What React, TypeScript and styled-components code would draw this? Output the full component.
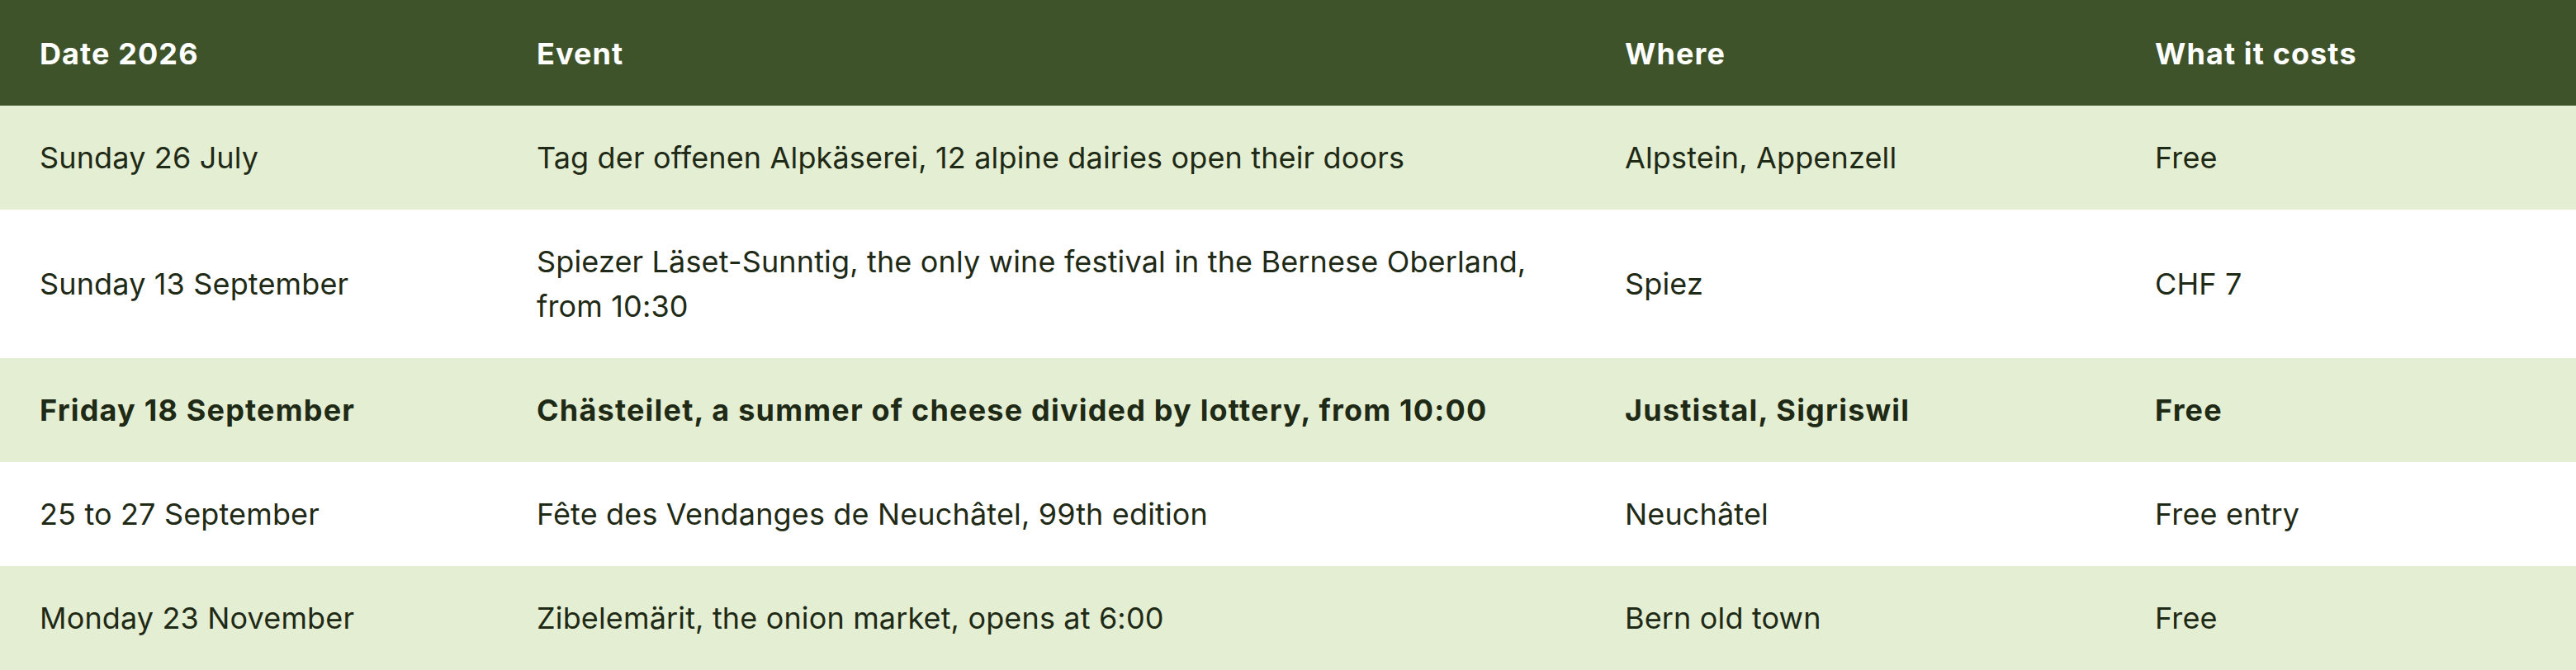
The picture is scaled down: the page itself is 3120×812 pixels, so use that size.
import React from "react";
import styled, { createGlobalStyle } from "styled-components";

const Global = createGlobalStyle`
  html, body { margin: 0; padding: 0; background: #ffffff; }
  body { font-family: Inter, "Noto Sans", "Liberation Sans", sans-serif; }
`;

const Table = styled.table`
  width: 3120px;
  border-collapse: collapse;
  table-layout: fixed;
  font-size: 36px;
  line-height: 54px;
  letter-spacing: 0.15px;
  color: #1f2a16;
`;

const HeadRow = styled.tr`
  background: #3e532a;
`;

const HeadCell = styled.th`
  padding: 38px 48px 36px;
  text-align: left;
  font-weight: 700;
  letter-spacing: 1.1px;
  color: #ffffff;
`;

const Row = styled.tr<{ $tint: boolean; $strong?: boolean }>`
  background: ${(p) => (p.$tint ? "#e4eed3" : "#ffffff")};
  font-weight: ${(p) => (p.$strong ? 700 : 400)};
  letter-spacing: ${(p) => (p.$strong ? "1.2px" : "0.15px")};
`;

const Cell = styled.td`
  padding: 36px 48px;
  vertical-align: middle;
`;

type Ev = { date: string; event: string; where: string; cost: string; strong?: boolean };

const events: Ev[] = [
  { date: "Sunday 26 July", event: "Tag der offenen Alpkäserei, 12 alpine dairies open their doors", where: "Alpstein, Appenzell", cost: "Free" },
  { date: "Sunday 13 September", event: "Spiezer Läset-Sunntig, the only wine festival in the Bernese Oberland, from 10:30", where: "Spiez", cost: "CHF 7" },
  { date: "Friday 18 September", event: "Chästeilet, a summer of cheese divided by lottery, from 10:00", where: "Justistal, Sigriswil", cost: "Free", strong: true },
  { date: "25 to 27 September", event: "Fête des Vendanges de Neuchâtel, 99th edition", where: "Neuchâtel", cost: "Free entry" },
  { date: "Monday 23 November", event: "Zibelemärit, the onion market, opens at 6:00", where: "Bern old town", cost: "Free" },
];

export default function App() {
  return (
    <>
      <Global />
      <Table>
        <colgroup>
          <col style={{ width: 602 }} />
          <col style={{ width: 1318 }} />
          <col style={{ width: 642 }} />
          <col style={{ width: 558 }} />
        </colgroup>
        <thead>
          <HeadRow>
            <HeadCell>Date 2026</HeadCell>
            <HeadCell>Event</HeadCell>
            <HeadCell>Where</HeadCell>
            <HeadCell>What it costs</HeadCell>
          </HeadRow>
        </thead>
        <tbody>
          {events.map((e, i) => (
            <Row key={e.date} $tint={i % 2 === 0} $strong={e.strong}>
              <Cell>{e.date}</Cell>
              <Cell>{e.event}</Cell>
              <Cell>{e.where}</Cell>
              <Cell>{e.cost}</Cell>
            </Row>
          ))}
        </tbody>
      </Table>
    </>
  );
}
